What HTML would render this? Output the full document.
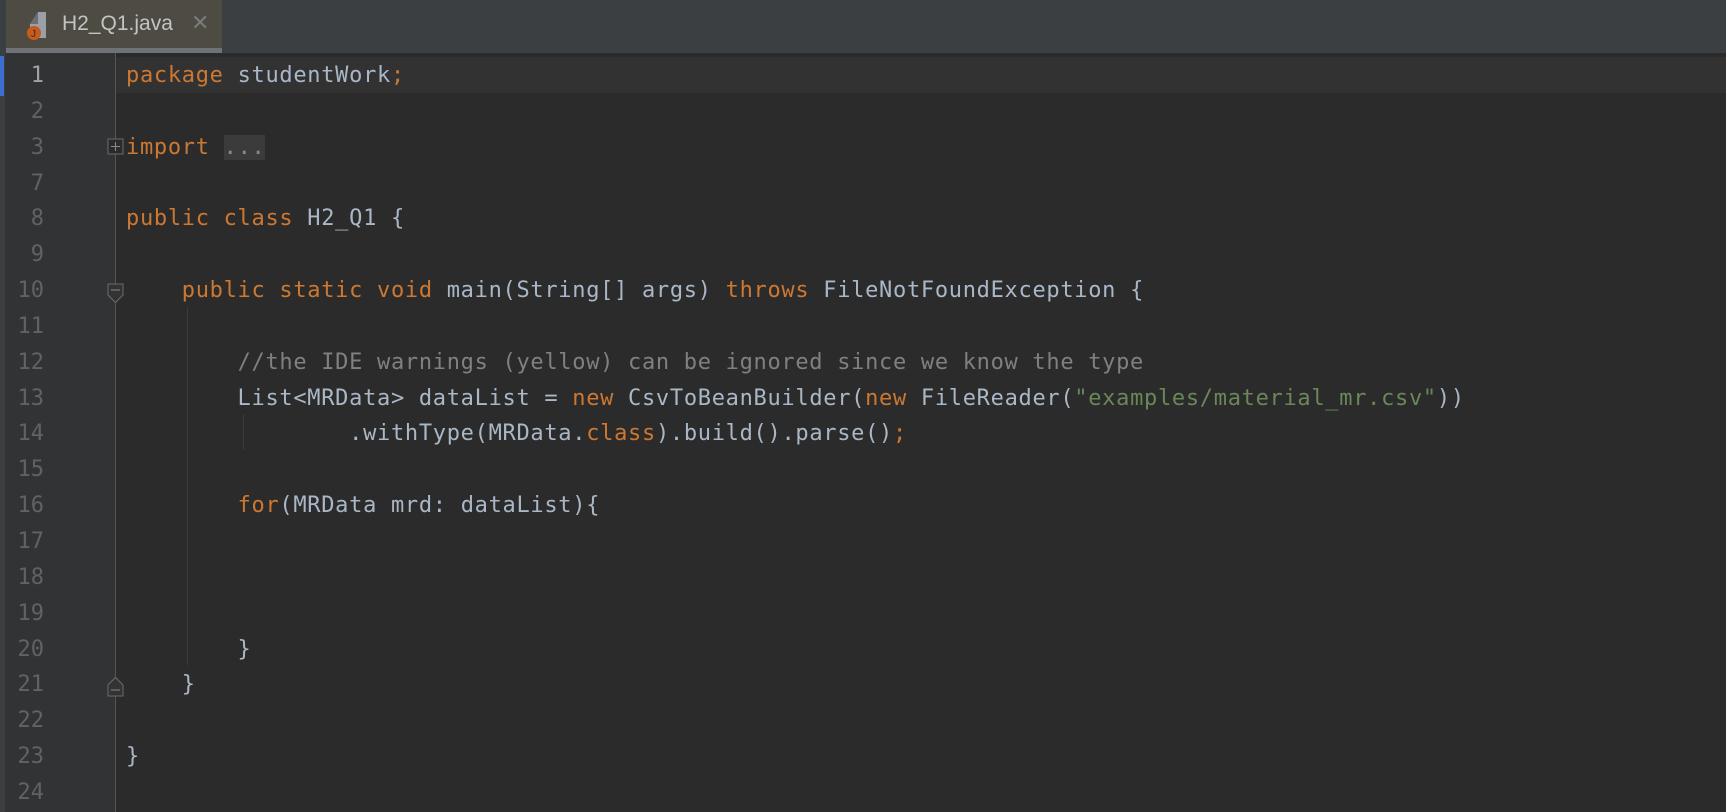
<!DOCTYPE html>
<html><head><meta charset="utf-8"><style>
*{margin:0;padding:0;box-sizing:border-box}
body{width:1726px;height:812px;background:#2b2b2b;overflow:hidden;position:relative;font-family:"DejaVu Sans Mono","Liberation Mono",monospace}
#tabs{position:absolute;left:0;top:0;width:1726px;height:53px;background:#3c3f41}
#tab{position:absolute;left:6px;top:0;width:216px;height:53px;background:#4e4b43;border-bottom:5px solid #6f7378}
#tab .name{position:absolute;left:56px;top:12px;font-family:"Liberation Sans",sans-serif;font-size:21px;color:#c4c4c4}
#tab .x{position:absolute;left:185px;top:10px;font-family:"Liberation Sans",sans-serif;font-size:22px;color:#7a7a7a}
#strip{position:absolute;left:0;top:0;width:5px;height:812px;background:#3c3f41}
#blue{position:absolute;left:0;top:56px;width:4px;height:40px;background:#3a6fd1}
#gutter{position:absolute;left:5px;top:53px;width:111px;height:759px;background:#313335}
#sep{position:absolute;left:115px;top:53px;width:1px;height:759px;background:#555}
#cur{position:absolute;left:116px;top:57px;width:1610px;height:36px;background:#323232}
.nums{position:absolute;left:0;top:58px;width:44px;text-align:right;font-size:22px;line-height:35.85px;color:#606366}
.nums div:first-child{color:#a4a3a3}
.code{position:absolute;left:126px;top:58px;font-size:22px;line-height:35.85px;color:#a9b7c6;white-space:pre;letter-spacing:0.7px}
.k{color:#cc7832}.c{color:#808080}.s{color:#6a8759}
.fold{background:#3b3b3b;color:#8a8a8a}
.guide{position:absolute;width:1px;background:#3b3b3b}
</style></head><body>
<div id="tabs"><div id="tab">
<svg style="position:absolute;left:18px;top:10px" width="30" height="32"><path d="M14 2h8v26h-16v-14z" fill="#9aa0a6"/><path d="M14 2v12h-8z" fill="#6b6f74"/><circle cx="10" cy="23" r="7" fill="#c75b1b"/><text x="7" y="27" font-size="10" fill="#2b2b2b" font-family="Liberation Sans">J</text></svg>
<span class="name">H2_Q1.java</span><span class="x">✕</span></div></div>
<div id="gutter"></div>
<div id="strip"></div><div id="blue"></div>
<div id="cur"></div>
<div id="sep"></div>
<div class="nums"><div>1</div><div>2</div><div>3</div><div>7</div><div>8</div><div>9</div><div>10</div><div>11</div><div>12</div><div>13</div><div>14</div><div>15</div><div>16</div><div>17</div><div>18</div><div>19</div><div>20</div><div>21</div><div>22</div><div>23</div><div>24</div></div>
<svg style="position:absolute;left:107px;top:138px" width="18" height="18"><rect x="1" y="1" width="15" height="15" fill="#2b2b2b" stroke="#6b6b6b"/><path d="M4 8.5h9M8.5 4v9" stroke="#8a8a8a"/></svg>
<svg style="position:absolute;left:107px;top:283px" width="18" height="22"><path d="M1 1h15v11l-7.5 7.5-7.5-7.5z" fill="#313335" stroke="#6b6b6b"/><path d="M4 7h9" stroke="#8a8a8a"/></svg>
<svg style="position:absolute;left:107px;top:675px" width="18" height="22"><path d="M1 21h15v-11l-7.5-7.5-7.5 7.5z" fill="#313335" stroke="#6b6b6b"/><path d="M4 15h9" stroke="#8a8a8a"/></svg>
<div class="guide" style="left:187px;top:307px;height:358px"></div>
<div class="guide" style="left:243px;top:414px;height:36px"></div>
<div class="code"><div><span class="k">package</span> studentWork<span class="k">;</span></div><div> </div><div><span class="k">import</span> <span class="fold">...</span></div><div> </div><div><span class="k">public class</span> H2_Q1 {</div><div> </div><div>    <span class="k">public static void</span> main(String[] args) <span class="k">throws</span> FileNotFoundException {</div><div> </div><div>        <span class="c">//the IDE warnings (yellow) can be ignored since we know the type</span></div><div>        List&lt;MRData&gt; dataList = <span class="k">new</span> CsvToBeanBuilder(<span class="k">new</span> FileReader(<span class="s">"examples/material_mr.csv"</span>))</div><div>                .withType(MRData.<span class="k">class</span>).build().parse()<span class="k">;</span></div><div> </div><div>        <span class="k">for</span>(MRData mrd: dataList){</div><div> </div><div> </div><div> </div><div>        }</div><div>    }</div><div> </div><div>}</div><div> </div></div>
</body></html>
